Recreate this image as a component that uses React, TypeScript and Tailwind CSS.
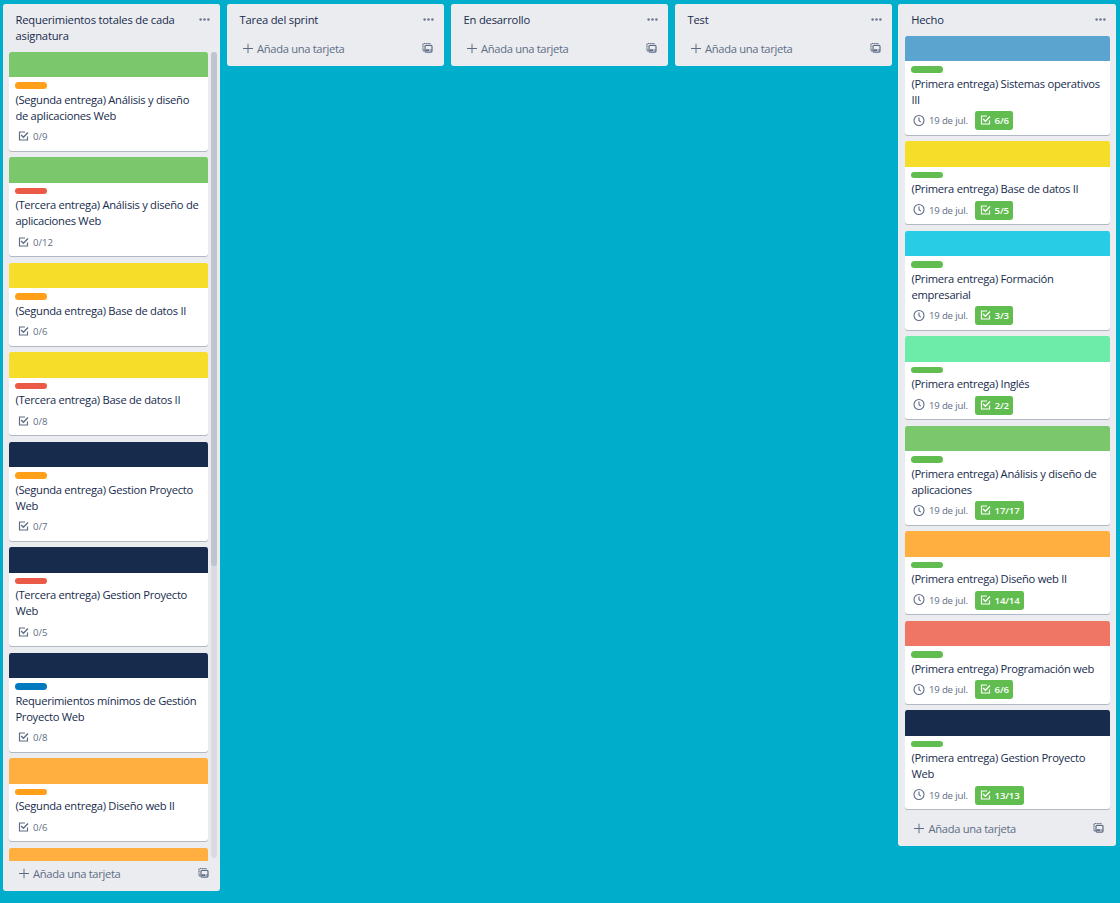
const font = { fontFamily: '"Open Sans", "Noto Sans", sans-serif' };

type CardData = { cover: string; label: string; lines: string[]; count: string; due?: string };
type LaneData = { title: string[]; cards: CardData[]; kind: 'backlog' | 'empty' | 'done' };

const ORANGE = 'bg-[#ff9f1a]';
const RED = 'bg-[#eb5a46]';
const BLUE = 'bg-[#0079bf]';
const GREEN = 'bg-[#61bd4f]';

const backlog: CardData[] = [
  { cover: 'bg-[#7bc86c]', label: ORANGE, lines: ['(Segunda entrega) Análisis y diseño', 'de aplicaciones Web'], count: '0/9' },
  { cover: 'bg-[#7bc86c]', label: RED, lines: ['(Tercera entrega) Análisis y diseño de', 'aplicaciones Web'], count: '0/12' },
  { cover: 'bg-[#f5dd29]', label: ORANGE, lines: ['(Segunda entrega) Base de datos II'], count: '0/6' },
  { cover: 'bg-[#f5dd29]', label: RED, lines: ['(Tercera entrega) Base de datos II'], count: '0/8' },
  { cover: 'bg-[#172b4d]', label: ORANGE, lines: ['(Segunda entrega) Gestion Proyecto', 'Web'], count: '0/7' },
  { cover: 'bg-[#172b4d]', label: RED, lines: ['(Tercera entrega) Gestion Proyecto', 'Web'], count: '0/5' },
  { cover: 'bg-[#172b4d]', label: BLUE, lines: ['Requerimientos mínimos de Gestión', 'Proyecto Web'], count: '0/8' },
  { cover: 'bg-[#ffaf3f]', label: ORANGE, lines: ['(Segunda entrega) Diseño web II'], count: '0/6' },
];

const due = '19 de jul.';
const done: CardData[] = [
  { cover: 'bg-[#5ba4cf]', label: GREEN, lines: ['(Primera entrega) Sistemas operativos', 'III'], count: '6/6', due },
  { cover: 'bg-[#f5dd29]', label: GREEN, lines: ['(Primera entrega) Base de datos II'], count: '5/5', due },
  { cover: 'bg-[#29cce5]', label: GREEN, lines: ['(Primera entrega) Formación', 'empresarial'], count: '3/3', due },
  { cover: 'bg-[#6deca9]', label: GREEN, lines: ['(Primera entrega) Inglés'], count: '2/2', due },
  { cover: 'bg-[#7bc86c]', label: GREEN, lines: ['(Primera entrega) Análisis y diseño de', 'aplicaciones'], count: '17/17', due },
  { cover: 'bg-[#ffaf3f]', label: GREEN, lines: ['(Primera entrega) Diseño web II'], count: '14/14', due },
  { cover: 'bg-[#ef7564]', label: GREEN, lines: ['(Primera entrega) Programación web'], count: '6/6', due },
  { cover: 'bg-[#172b4d]', label: GREEN, lines: ['(Primera entrega) Gestion Proyecto', 'Web'], count: '13/13', due },
];

const lanes: LaneData[] = [
  { title: ['Requerimientos totales de cada', 'asignatura'], cards: backlog, kind: 'backlog' },
  { title: ['Tarea del sprint'], cards: [], kind: 'empty' },
  { title: ['En desarrollo'], cards: [], kind: 'empty' },
  { title: ['Test'], cards: [], kind: 'empty' },
  { title: ['Hecho'], cards: done, kind: 'done' },
];

function CheckIcon() {
  return (
    <svg className="size-[11px] shrink-0 -translate-y-[0.5px]" viewBox="0 0 11 11" fill="none" stroke="currentColor" strokeWidth="1.2">
      <path d="M7 1.5H1.5V9.5H9.5V6" />
      <path d="M3.2 4.6L5.4 6.7L10 2" strokeWidth="1.4" />
    </svg>
  );
}

function ClockIcon() {
  return (
    <svg className="size-[12px] shrink-0 -translate-y-[0.5px]" viewBox="0 0 12 12" fill="none" stroke="currentColor" strokeWidth="1.1">
      <circle cx="6" cy="6" r="5" />
      <path d="M6 3V6.2L7.8 7.6" />
    </svg>
  );
}

function DotsIcon() {
  return (
    <svg className="h-[3px] w-[11px] shrink-0" viewBox="0 0 11 3" fill="#6b778c">
      <circle cx="1.6" cy="1.5" r="1.25" />
      <circle cx="5.5" cy="1.5" r="1.25" />
      <circle cx="9.4" cy="1.5" r="1.25" />
    </svg>
  );
}

function PlusIcon() {
  return (
    <svg className="h-[10px] w-[10px] shrink-0 -translate-y-[0.5px]" viewBox="0 0 10 10" fill="none" stroke="currentColor" strokeWidth="1">
      <path d="M5 0V10M0 5H10" />
    </svg>
  );
}

function TemplateIcon() {
  return (
    <svg className="size-[11px] shrink-0 -translate-y-[0.5px]" viewBox="0 0 11 11" fill="none" stroke="currentColor">
      <path d="M8.5 1H2.2Q1 1 1 2.2V8.4H2.4" strokeWidth="1.2" strokeDasharray="1.3 .5" />
      <rect x="3" y="2.8" width="7" height="6.8" rx="1" strokeWidth="1.2" />
      <path d="M3.5 7.6H7.4" strokeWidth="1.8" />
      <path d="M8.4 7.6H9.5" strokeWidth="1.8" />
    </svg>
  );
}

function Card({ card }: { card: CardData }) {
  return (
    <article className={`shrink-0 ${card.lines.length === 2 ? 'h-[105.5px]' : 'h-[89.5px]'}`}>
      <div className="flex h-[calc(100%-6.2px)] flex-col overflow-hidden rounded-[2.4px] bg-white shadow-[0_1px_0_#091e4240]">
        <div className={`h-[25.6px] shrink-0 ${card.cover}`} />
        <div className="px-[6.4px] pt-[5px]">
          <div className={`h-[6.4px] w-8 rounded-full ${card.label}`} />
          <div className="mt-[3.2px] text-[11.2px] leading-4 text-[#172b4d]">
            {card.lines.map((l) => (
              <div key={l} className="whitespace-nowrap tracking-[-0.28px]">{l}</div>
            ))}
          </div>
          {card.due ? (
            <div className="mt-[3.4px] flex h-[19px] items-center pl-[2px] text-[9.6px] text-[#5e6c84]">
              <ClockIcon />
              <span className="ml-[3.5px] w-[46.5px] translate-y-px whitespace-nowrap tracking-[-0.15px]">{card.due}</span>
              <span className="flex h-[19px] items-center gap-[3.2px] rounded-[2.4px] bg-[#61bd4f] pr-1 pl-[5px] font-semibold text-white">
                <CheckIcon />
                <span className="translate-y-px tracking-[-0.15px]">{card.count}</span>
              </span>
            </div>
          ) : (
            <div className="mt-[3.4px] flex h-[19px] items-center gap-[3.5px] pl-[3px] text-[9.6px] text-[#5e6c84]">
              <CheckIcon />
              <span className="translate-y-px">{card.count}</span>
            </div>
          )}
        </div>
      </div>
    </article>
  );
}

function Lane({ lane }: { lane: LaneData }) {
  const size =
    lane.kind === 'backlog' ? 'w-[217px] h-[887px] mr-[7px]' : lane.kind === 'done' ? 'w-[218px] h-[842px] -ml-px' : 'w-[217px] h-[62px] mr-[7px]';
  return (
    <section className={`flex shrink-0 flex-col overflow-hidden rounded-[2.4px] bg-[#ebecf0] ${size}`}>
      <header className={`flex shrink-0 justify-between pt-2 pr-[10px] ${lane.kind === 'done' ? 'pl-[13.2px]' : 'pl-[12.5px]'} ${lane.kind === 'backlog' ? 'h-[47.6px]' : 'h-[31.6px]'}`}>
        <h2 className="text-[11.2px] leading-4 font-medium text-[#172b4d]">
          {lane.title.map((l) => (
            <div key={l} className="whitespace-nowrap tracking-[-0.19px]">{l}</div>
          ))}
        </h2>
        <div className="pt-[6px]"><DotsIcon /></div>
      </header>
      {lane.kind === 'backlog' && (
        <div className="flex h-[809.4px] shrink-0 overflow-hidden pl-[6px]">
          <div className="w-[199px] shrink-0">
            {lane.cards.map((c, i) => <Card key={i} card={c} />)}
            <div className="h-[14px] rounded-t-[2.4px] bg-[#ffaf3f]" />
          </div>
          <div className="ml-[3px] h-[806px] w-[6px] rounded-full bg-[#dadbe2]">
            <div className="h-[514px] rounded-full bg-[#bfc4ce]" />
          </div>
        </div>
      )}
      {lane.kind === 'done' && (
        <div className="w-[212px] shrink-0 pl-[7px]">
          {lane.cards.map((c, i) => <Card key={i} card={c} />)}
        </div>
      )}
      <footer className={`flex items-center text-[#5e6c84] ${lane.kind === 'backlog' ? 'h-[26px] pr-[11.5px] pl-[15.5px]' : lane.kind === 'done' ? 'h-[26px] pr-[12px] pl-[16px]' : 'h-[26px] pr-[11.5px] pl-[15.5px]'}`}>
        <PlusIcon />
        <span className="ml-[4.5px] flex-1 text-[11.2px] leading-4 tracking-[-0.33px] whitespace-nowrap">Añada una tarjeta</span>
        <TemplateIcon />
      </footer>
    </section>
  );
}

export default function App() {
  return (
    <main className="flex h-[903px] w-[1120px] items-start overflow-hidden bg-[#00aecc] pt-1 pl-[3px]" style={font}>
      {lanes.map((l) => <Lane key={l.title[0]} lane={l} />)}
    </main>
  );
}
